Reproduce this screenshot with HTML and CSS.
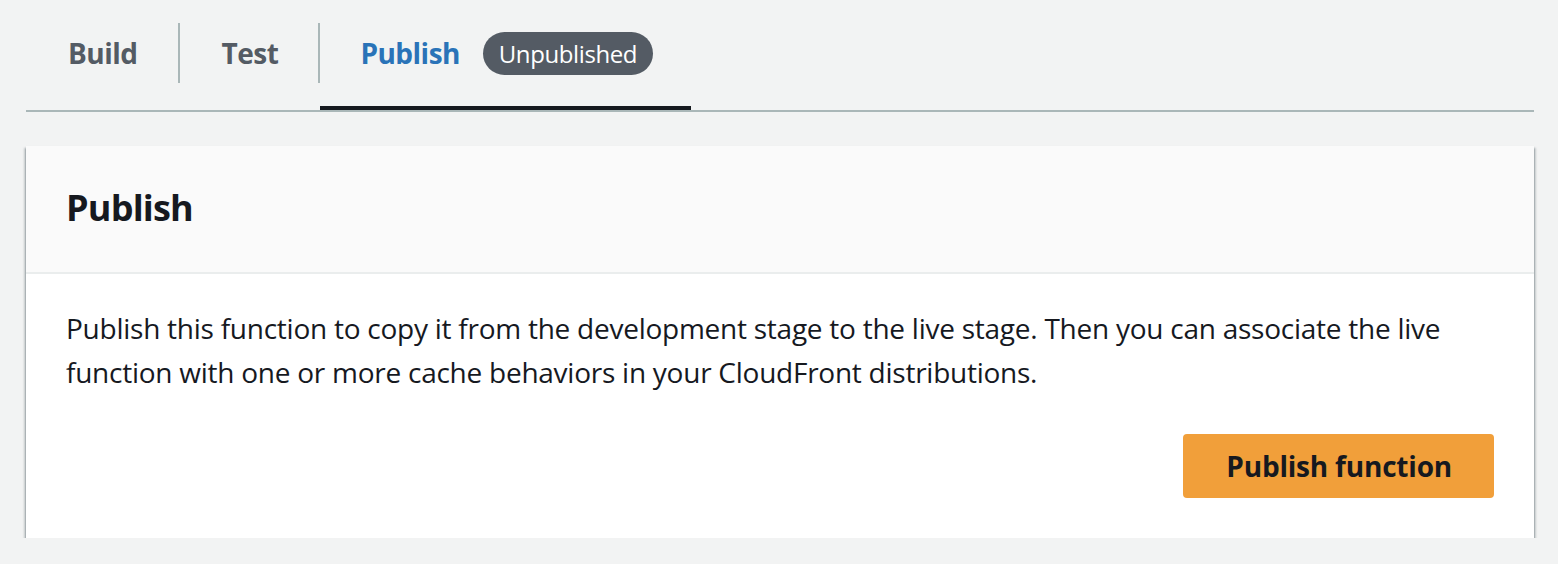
FILE: index.html
```html
<!DOCTYPE html>
<html>
<head>
<meta charset="utf-8">
<link rel="stylesheet" href="styles.css">
</head>
<body>
<div class="page">
  <div class="tabs">
    <div class="tab"><span class="tab-label">Build</span></div>
    <div class="tab-sep"></div>
    <div class="tab"><span class="tab-label">Test</span></div>
    <div class="tab-sep"></div>
    <div class="tab tab-active"><span class="tab-label">Publish <span class="badge">Unpublished</span></span></div>
  </div>
  <div class="card">
    <div class="card-header"><h2 class="card-title">Publish</h2></div>
    <div class="card-body">
      <p class="card-text">Publish this function to copy it from the development stage to the live stage. Then you can associate the live function with one or more cache behaviors in your CloudFront distributions.</p>
      <div class="actions"><button class="btn-primary">Publish function</button></div>
    </div>
  </div>
</div>
</body>
</html>
```
FILE: styles.css
```css
html, body {
  margin: 0;
  padding: 0;
  background: #f2f3f3;
}
body {
  font-family: "Open Sans", Lato, sans-serif;
  color: #16191f;
}
.page {
  padding: 0 24px 0 26px;
}
.tabs {
  display: flex;
  align-items: flex-start;
  border-bottom: 2px solid #aab7b8;
}
.tab {
  padding: 23px 0;
  border-bottom: 4px solid transparent;
}
.tab-active {
  border-bottom-color: #16191f;
}
.tab-label {
  height: 60px;
  display: flex;
  align-items: center;
  padding: 0 40px 0 42px;
  font-size: 28px;
  font-weight: 700;
  letter-spacing: -0.5px;
  color: #545b64;
  white-space: pre;
}
.tab-active .tab-label {
  color: #2a73b8;
  padding-left: 40px;
  padding-right: 38px;
}
.tab-sep {
  width: 2px;
  height: 60px;
  margin-top: 23px;
  background: #aab7b8;
}
.badge {
  display: inline-flex;
  align-items: center;
  height: 43px;
  margin-left: 16px;
  padding: 0 16px;
  border-radius: 22px;
  background: #545b64;
  color: #ffffff;
  font-size: 24px;
  font-weight: 400;
  letter-spacing: -0.4px;
}
.card {
  margin-top: 34px;
  background: #ffffff;
  box-shadow: 0 2px 2px 0 rgba(0, 28, 36, 0.55), 2px 2px 2px 0 rgba(0, 28, 36, 0.15), -2px 2px 2px 0 rgba(0, 28, 36, 0.15);
}
.card-header {
  background: #fafafa;
  padding: 38px 40px 40px;
  border-bottom: 2px solid #eaeded;
}
.card-title {
  margin: 0;
  font-size: 36px;
  line-height: 48px;
  font-weight: 700;
  letter-spacing: -0.8px;
}
.card-body {
  padding: 32px 40px 40px;
}
.card-text {
  margin: 0;
  font-size: 28px;
  line-height: 44px;
  letter-spacing: -0.25px;
}
.actions {
  display: flex;
  justify-content: flex-end;
  margin-top: 40px;
}
.btn-primary {
  height: 64px;
  padding: 0 42px 0 43px;
  border: none;
  border-radius: 4px;
  background: #f19f3a;
  color: #16191f;
  font-family: inherit;
  font-size: 28px;
  font-weight: 700;
  letter-spacing: -0.2px;
}
```
